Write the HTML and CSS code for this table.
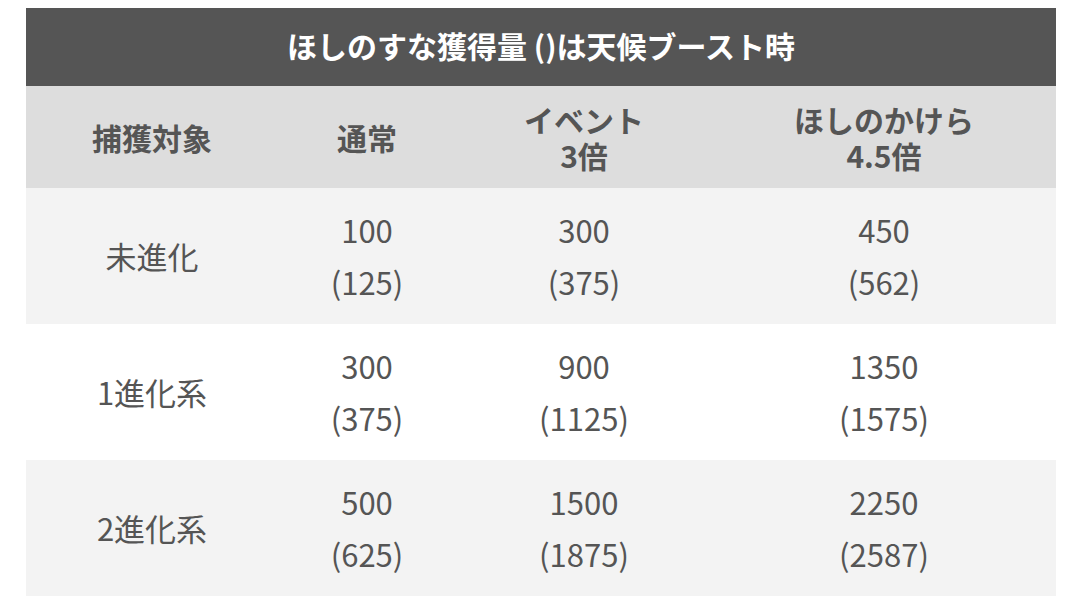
FILE: index.html
```html
<!DOCTYPE html>
<html lang="ja">
<head>
<meta charset="utf-8">
<link rel="stylesheet" href="styles.css">
</head>
<body>
<div class="wrap">
<table class="tbl">
  <colgroup>
    <col class="c1"><col class="c2"><col class="c3"><col class="c4">
  </colgroup>
  <thead>
    <tr><th class="title" colspan="4">ほしのすな獲得量 ()は天候ブースト時</th></tr>
    <tr class="head">
      <th>捕獲対象</th>
      <th>通常</th>
      <th>イベント<br>3倍</th>
      <th>ほしのかけら<br>4.5倍</th>
    </tr>
  </thead>
  <tbody>
    <tr class="odd">
      <td>未進化</td><td>100<br>(125)</td><td>300<br>(375)</td><td>450<br>(562)</td>
    </tr>
    <tr class="even">
      <td>1進化系</td><td>300<br>(375)</td><td>900<br>(1125)</td><td>1350<br>(1575)</td>
    </tr>
    <tr class="odd">
      <td>2進化系</td><td>500<br>(625)</td><td>1500<br>(1875)</td><td>2250<br>(2587)</td>
    </tr>
  </tbody>
</table>
</div>
</body>
</html>
```

FILE: styles.css
```css
html, body {
  margin: 0;
  padding: 0;
  background: #fff;
}
.wrap {
  padding: 8px 24px 0 26px;
}
.tbl {
  width: 1030px;
  border-collapse: collapse;
  table-layout: fixed;
  font-family: "Noto Sans CJK JP", "Noto Sans", sans-serif;
  color: #555;
}
.c1 { width: 252px; }
.c2 { width: 178px; }
.c3 { width: 256px; }
.c4 { width: 344px; }
.tbl th, .tbl td {
  padding: 0;
  text-align: center;
  vertical-align: middle;
}
.title {
  background: #555;
  color: #fff;
  height: 78px;
  font-size: 30px;
  font-weight: 700;
  line-height: 36px;
  padding-bottom: 4px !important;
  box-sizing: border-box;
}
.head th {
  background: #dddddd;
  height: 102px;
  font-size: 30px;
  font-weight: 700;
  line-height: 36px;
}
.tbl td {
  height: 136px;
  font-size: 31px;
  font-weight: 400;
  line-height: 52px;
}
.odd td { background: #f3f3f3; }
.even td { background: #fff; }
```
